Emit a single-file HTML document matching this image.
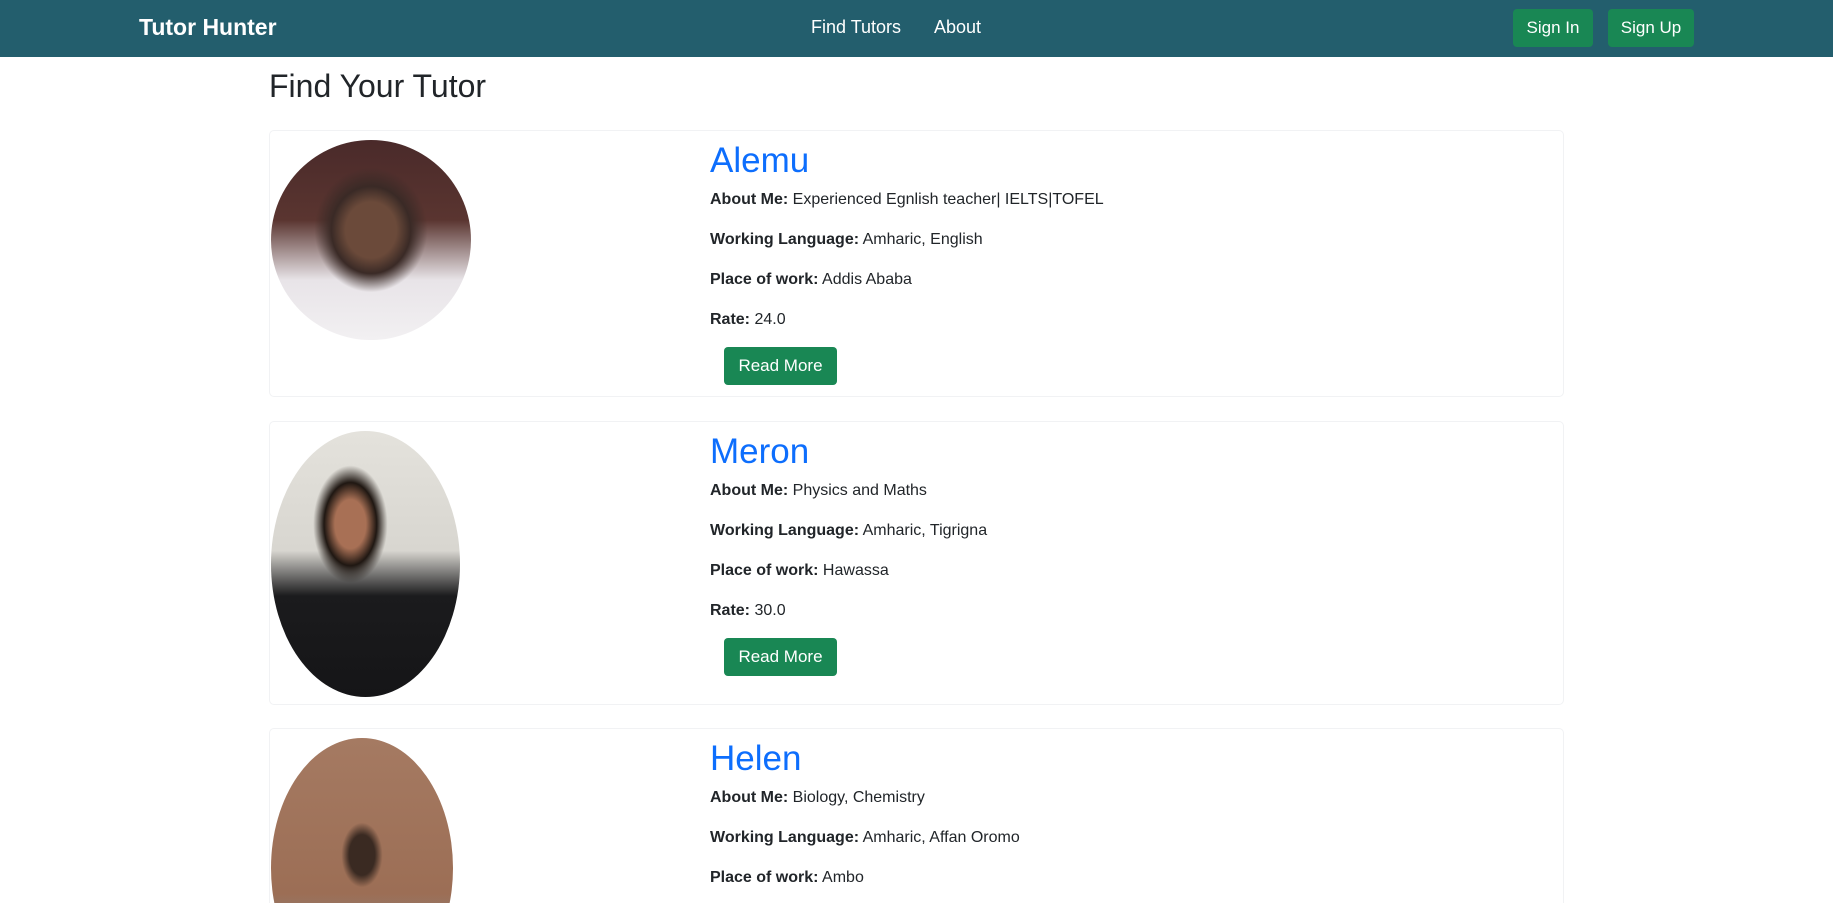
<!DOCTYPE html>
<html style="width:1833px;height:903px;overflow:hidden"><head><meta charset="utf-8"><style>
*{box-sizing:border-box;margin:0;padding:0}
body{width:1833px;height:903px;overflow:hidden;background:#fff;font-family:"Liberation Sans",sans-serif;color:#212529}
#wrap{position:relative;width:1833px;height:903px;overflow:hidden}
.nav{position:absolute;left:0;top:0;width:1833px;height:57px;background:#235e6d}
.logo{position:absolute;left:139px;top:14px;color:#fff;font-weight:bold;font-size:23px}
.nl{position:absolute;top:17px;color:#fff;font-size:18px}
.btn{position:absolute;background:#198754;color:#fff;border-radius:4px;font-size:17px;display:flex;align-items:center;justify-content:center}
h2{position:absolute;left:269px;top:68px;font-size:32px;font-weight:normal}
.card{position:absolute;left:269px;width:1295px;border:1px solid #f1f2f4;border-radius:5px}
.img{position:absolute;left:1px;border-radius:50%}
.name{position:absolute;left:440px;color:#0d6efd;font-size:35px}
.p{position:absolute;left:440px;font-size:16px;white-space:nowrap}
.p b{font-weight:bold}
</style></head><body><div id="wrap">
<div class="nav">
<div class="logo">Tutor Hunter</div>
<div class="nl" style="left:811px">Find Tutors</div>
<div class="nl" style="left:934px">About</div>
<div class="btn" style="left:1513px;top:9px;width:80px;height:38px">Sign In</div>
<div class="btn" style="left:1608px;top:9px;width:86px;height:38px">Sign Up</div>
</div>
<h2>Find Your Tutor</h2>

<div class="card" style="top:130px;height:267px">
<div class="img" style="top:9px;width:200px;height:200px;background:radial-gradient(ellipse at 50% 45%,#6b4a3a 0 18%,#3a2a26 28%,transparent 40%),linear-gradient(180deg,#4a2a2a 0%,#5a3530 40%,#e8e4e8 70%,#f2f0f2 100%)"></div>
<div class="name" style="top:10px">Alemu</div>
<div class="p" style="top:60px"><b>About Me:</b> Experienced Egnlish teacher| IELTS|TOFEL</div>
<div class="p" style="top:100px"><b>Working Language:</b> Amharic, English</div>
<div class="p" style="top:140px"><b>Place of work:</b> Addis Ababa</div>
<div class="p" style="top:180px"><b>Rate:</b> 24.0</div>
<div class="btn" style="left:454px;top:216px;width:113px;height:38px">Read More</div>
</div>

<div class="card" style="top:421px;height:284px">
<div class="img" style="top:9px;width:189px;height:266px;background:radial-gradient(ellipse at 42% 35%,#a87055 0 10%,#1f1712 17%,transparent 24%),linear-gradient(180deg,#e4e2dc 0%,#d8d6d0 45%,#1b1b1d 62%,#151517 100%)"></div>
<div class="name" style="top:10px">Meron</div>
<div class="p" style="top:60px"><b>About Me:</b> Physics and Maths</div>
<div class="p" style="top:100px"><b>Working Language:</b> Amharic, Tigrigna</div>
<div class="p" style="top:140px"><b>Place of work:</b> Hawassa</div>
<div class="p" style="top:180px"><b>Rate:</b> 30.0</div>
<div class="btn" style="left:454px;top:216px;width:113px;height:38px">Read More</div>
</div>

<div class="card" style="top:728px;height:300px">
<div class="img" style="top:9px;width:182px;height:260px;background:radial-gradient(ellipse at 50% 45%,#3a2a22 0 10%,transparent 16%),linear-gradient(180deg,#a57a62 0%,#9c6e55 60%,#888 80%,#777 100%)"></div>
<div class="name" style="top:10px">Helen</div>
<div class="p" style="top:60px"><b>About Me:</b> Biology, Chemistry</div>
<div class="p" style="top:100px"><b>Working Language:</b> Amharic, Affan Oromo</div>
<div class="p" style="top:140px"><b>Place of work:</b> Ambo</div>
</div>
</div></body></html>
